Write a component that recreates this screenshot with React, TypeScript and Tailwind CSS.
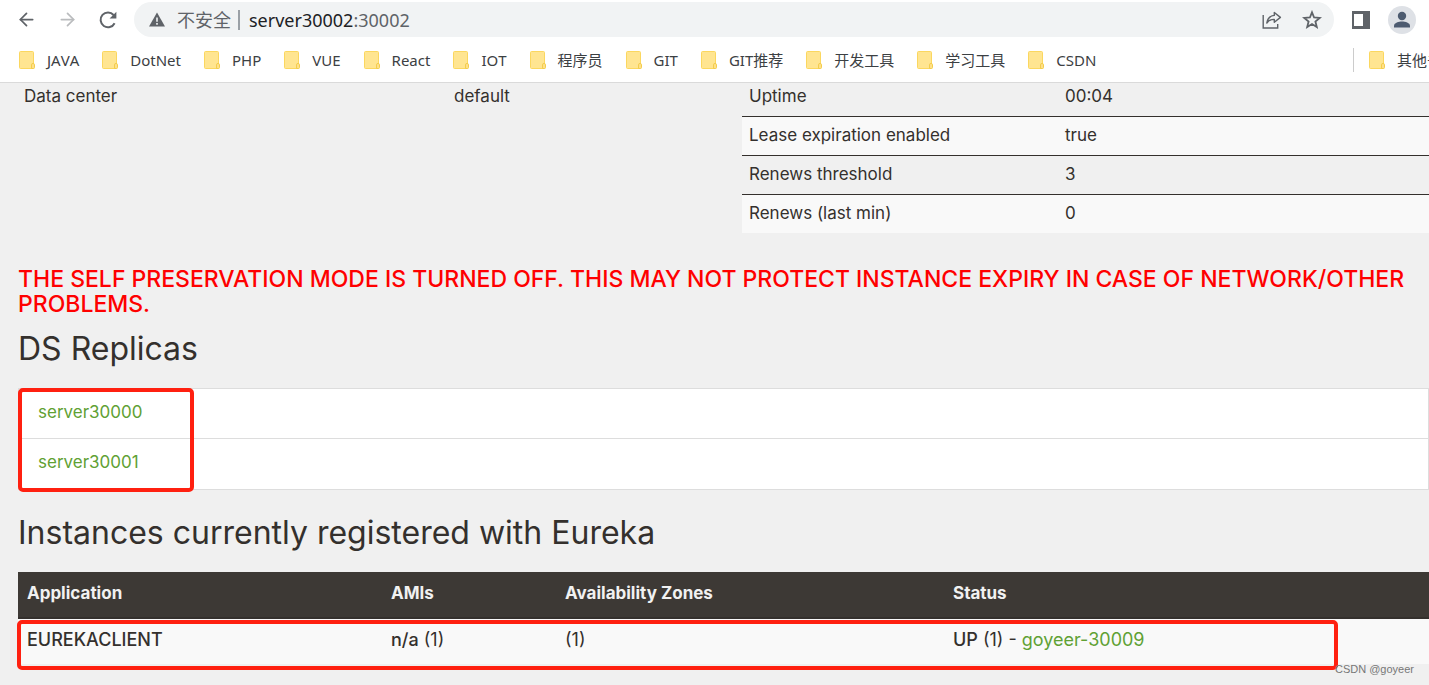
import React from 'react';
import { ArrowLeft, ArrowRight } from 'lucide-react';

const bookmarks = [
  'JAVA',
  'DotNet',
  'PHP',
  'VUE',
  'React',
  'IOT',
  '程序员',
  'GIT',
  'GIT推荐',
  '开发工具',
  '学习工具',
  'CSDN',
];

const generalInfo = [
  { name: 'Uptime', value: '00:04' },
  { name: 'Lease expiration enabled', value: 'true' },
  { name: 'Renews threshold', value: '3' },
  { name: 'Renews (last min)', value: '0' },
];

const replicas = ['server30000', 'server30001'];

const FolderIcon: React.FC = () => (
  <svg width="16" height="18" viewBox="0 0 16 18" className="shrink-0" aria-hidden="true">
    <rect x="0.5" y="0.5" width="14" height="17" rx="1" fill="#ffe591" stroke="#fbd75f" />
    <path d="M12.5 17.5v-3.6a1.5 1.5 0 0 1 3 0v2.6a1 1 0 0 1-1 1z" fill="#ffe08a" stroke="#f3cd4c" />
  </svg>
);

const Bookmark: React.FC<{ label: string }> = ({ label }) => (
  <a href="#" className="flex shrink-0 items-center gap-3 whitespace-nowrap">
    <FolderIcon />
    <span>{label}</span>
  </a>
);

const BrowserBar: React.FC = () => (
  <header className="border-b border-[#dadada] bg-white font-['Noto_Sans','Noto_Sans_CJK_SC',sans-serif]">
    <div className="flex h-[39px] items-center pr-[13px] pl-4">
      <div className="flex items-center gap-5 text-[#5f6368]">
        <button type="button" aria-label="Back">
          <ArrowLeft size={21} />
        </button>
        <button type="button" aria-label="Forward" className="text-[#babcbe]">
          <ArrowRight size={21} />
        </button>
        <button type="button" aria-label="Reload">
          <svg width="20" height="20" viewBox="0 0 20 20" fill="none" stroke="currentColor" strokeWidth="2">
            <path d="M16.6 13.2A7.4 7.4 0 1 1 15.6 5" />
            <path d="M18.4 1.8v6.8h-6.8z" fill="currentColor" stroke="none" />
          </svg>
        </button>
      </div>

      <div className="ml-4 flex h-[35px] flex-1 items-center rounded-full bg-[#f1f3f4] pr-3 pl-[15px] text-lg text-[#5f6368]">
        <svg width="16" height="15" viewBox="0 0 16 15" aria-hidden="true">
          <path d="M8 0.5 16 14.5H0z" fill="#5f6368" />
          <path d="M7.2 5.5h1.6v4.2H7.2zM7.2 11h1.6v1.7H7.2z" fill="#f1f3f4" />
        </svg>
        <span className="ml-3">不安全</span>
        <span className="mx-[7px] h-5 w-0.5 bg-[#9aa0a6]" />
        <span className="flex-1 pl-0.5">
          <span className="text-[#202124]">server30002</span>:30002
        </span>
        <button type="button" aria-label="Share" className="mr-5">
          <svg width="20" height="18" viewBox="0 0 20 18" fill="none" stroke="#5f6368" strokeWidth="1.4">
            <path d="M1.2 4v13h14.5v-4" />
            <path d="M12.3 1.5 18.4 6.4l-6.1 4.9V8.4c-3.5-.1-5.8 1-7.5 3.7.5-4.2 3-7.2 7.5-7.7z" strokeLinejoin="round" />
          </svg>
        </button>
        <button type="button" aria-label="Bookmark this page">
          <svg width="20" height="19" viewBox="0 0 20 19" fill="none" stroke="#5f6368" strokeWidth="1.8">
            <path d="m10 2.3 2.1 5.2 5.6.4-4.3 3.6 1.4 5.5-4.8-3-4.8 3 1.4-5.5L2.3 7.9l5.6-.4z" />
          </svg>
        </button>
      </div>

      <button type="button" aria-label="Side panel" className="ml-[18px]">
        <svg width="18" height="18" viewBox="0 0 18 18">
          <path d="M0 0h18v18H0zM2 3v12h9V3z" fill="#5f6368" fillRule="evenodd" />
        </svg>
      </button>
      <button type="button" aria-label="Profile" className="ml-[18px]">
        <svg width="28" height="28" viewBox="0 0 28 28">
          <circle cx="14" cy="14" r="14" fill="#dee1e6" />
          <circle cx="14" cy="10" r="4.2" fill="#4d5b70" />
          <path d="M6 21.5v-1.8c0-2.8 4.8-4.2 8-4.2s8 1.4 8 4.2v1.8z" fill="#4d5b70" />
        </svg>
      </button>
    </div>

    <nav className="flex h-[43px] items-center overflow-hidden pb-0.5 pl-[19px] text-[15px] text-[#3c4043] [font-kerning:none]">
      <div className="flex flex-1 items-center gap-[23px]">
        {bookmarks.map((label) => (
          <Bookmark key={label} label={label} />
        ))}
      </div>
      <div className="flex w-[76px] items-center overflow-hidden border-l border-[#cccccc] pl-[15px]">
        <Bookmark label="其他书签" />
      </div>
    </nav>
  </header>
);

const App: React.FC = () => {
  return (
    <div className="min-h-screen overflow-hidden bg-[#f0f0f0] font-['Inter',sans-serif] text-[17px] leading-6 text-[#34302d]">
      <BrowserBar />

      <main className="pl-[18px]">
        {/* System status */}
        <section className="grid grid-cols-[724fr_687fr] items-start">
          <table className="mr-9 table-fixed">
            <tbody>
              <tr>
                <td className="w-[430px] px-1.5 pt-px">Data center</td>
                <td className="px-1.5 pt-px">default</td>
              </tr>
            </tbody>
          </table>
          <table className="w-full table-fixed">
            <tbody>
              {generalInfo.map((row) => (
                <tr
                  key={row.name}
                  className="group border-t border-[#34302d] first:border-t-0 even:bg-[#f9f9f9]"
                >
                  <td className="w-[46%] px-[7px] pt-1.5 pb-2 group-first:pt-px">{row.name}</td>
                  <td className="px-[7px] pt-1.5 pb-2 group-first:pt-px">{row.value}</td>
                </tr>
              ))}
            </tbody>
          </table>
        </section>

        <h4 className="mt-[34px] text-[23px] leading-[25px] font-medium text-[#ff0000]">
          THE SELF PRESERVATION MODE IS TURNED OFF. THIS MAY NOT PROTECT INSTANCE EXPIRY IN CASE OF
          NETWORK/OTHER PROBLEMS.
        </h4>

        {/* Peers of this registry */}
        <h1 className="mt-3 text-[32px] leading-10">DS Replicas</h1>
        <div className="relative mt-[19px]">
          <ul className="divide-y divide-[#dddddd] border border-[#dddddd] bg-white">
            {replicas.map((name) => (
              <li key={name} className="h-[50px] px-[19px] py-[11px]">
                <a href="#" className="text-[#5fa134]">
                  {name}
                </a>
              </li>
            ))}
          </ul>
          <div className="pointer-events-none absolute top-0 -bottom-0.5 left-0 w-[176px] rounded-[5px] border-4 border-[#ff2010]" />
        </div>

        <h1 className="mt-[23px] text-[32px] leading-10">Instances currently registered with Eureka</h1>
        <div className="relative mt-[19px]">
          <table className="w-full table-fixed text-left">
            <thead className="border-b-2 border-[#34302d] bg-[#3d3935] text-[#f1f1f1]">
              <tr>
                <th className="w-[364px] px-[9px] pt-[9px] pb-3">Application</th>
                <th className="w-[174px] px-[9px] pt-[9px] pb-3">AMIs</th>
                <th className="w-[388px] px-[9px] pt-[9px] pb-3">Availability Zones</th>
                <th className="px-[9px] pt-[9px] pb-3">Status</th>
              </tr>
            </thead>
            <tbody className="bg-[#f9f9f9] text-lg leading-6">
              <tr>
                <td className="px-[9px] pt-[9px] pb-3 font-medium">EUREKACLIENT</td>
                <td className="px-[9px] pt-[9px] pb-3">
                  <b className="font-medium">n/a</b> (1)
                </td>
                <td className="px-[9px] pt-[9px] pb-3">(1)</td>
                <td className="px-[9px] pt-[9px] pb-3">
                  <b className="font-medium">UP</b> (1) -{' '}
                  <a href="#" className="text-[#5fa134]">
                    goyeer-30009
                  </a>
                </td>
              </tr>
            </tbody>
          </table>
          <div className="pointer-events-none absolute top-12 right-[91px] -left-px h-[50px] rounded-[5px] border-4 border-[#ff2010]" />
          <span className="absolute top-[89px] right-[15px] font-['Liberation_Sans',sans-serif] text-[11px] leading-4 text-[#777777]">
            CSDN @goyeer
          </span>
        </div>
      </main>
    </div>
  );
};

export default App;
